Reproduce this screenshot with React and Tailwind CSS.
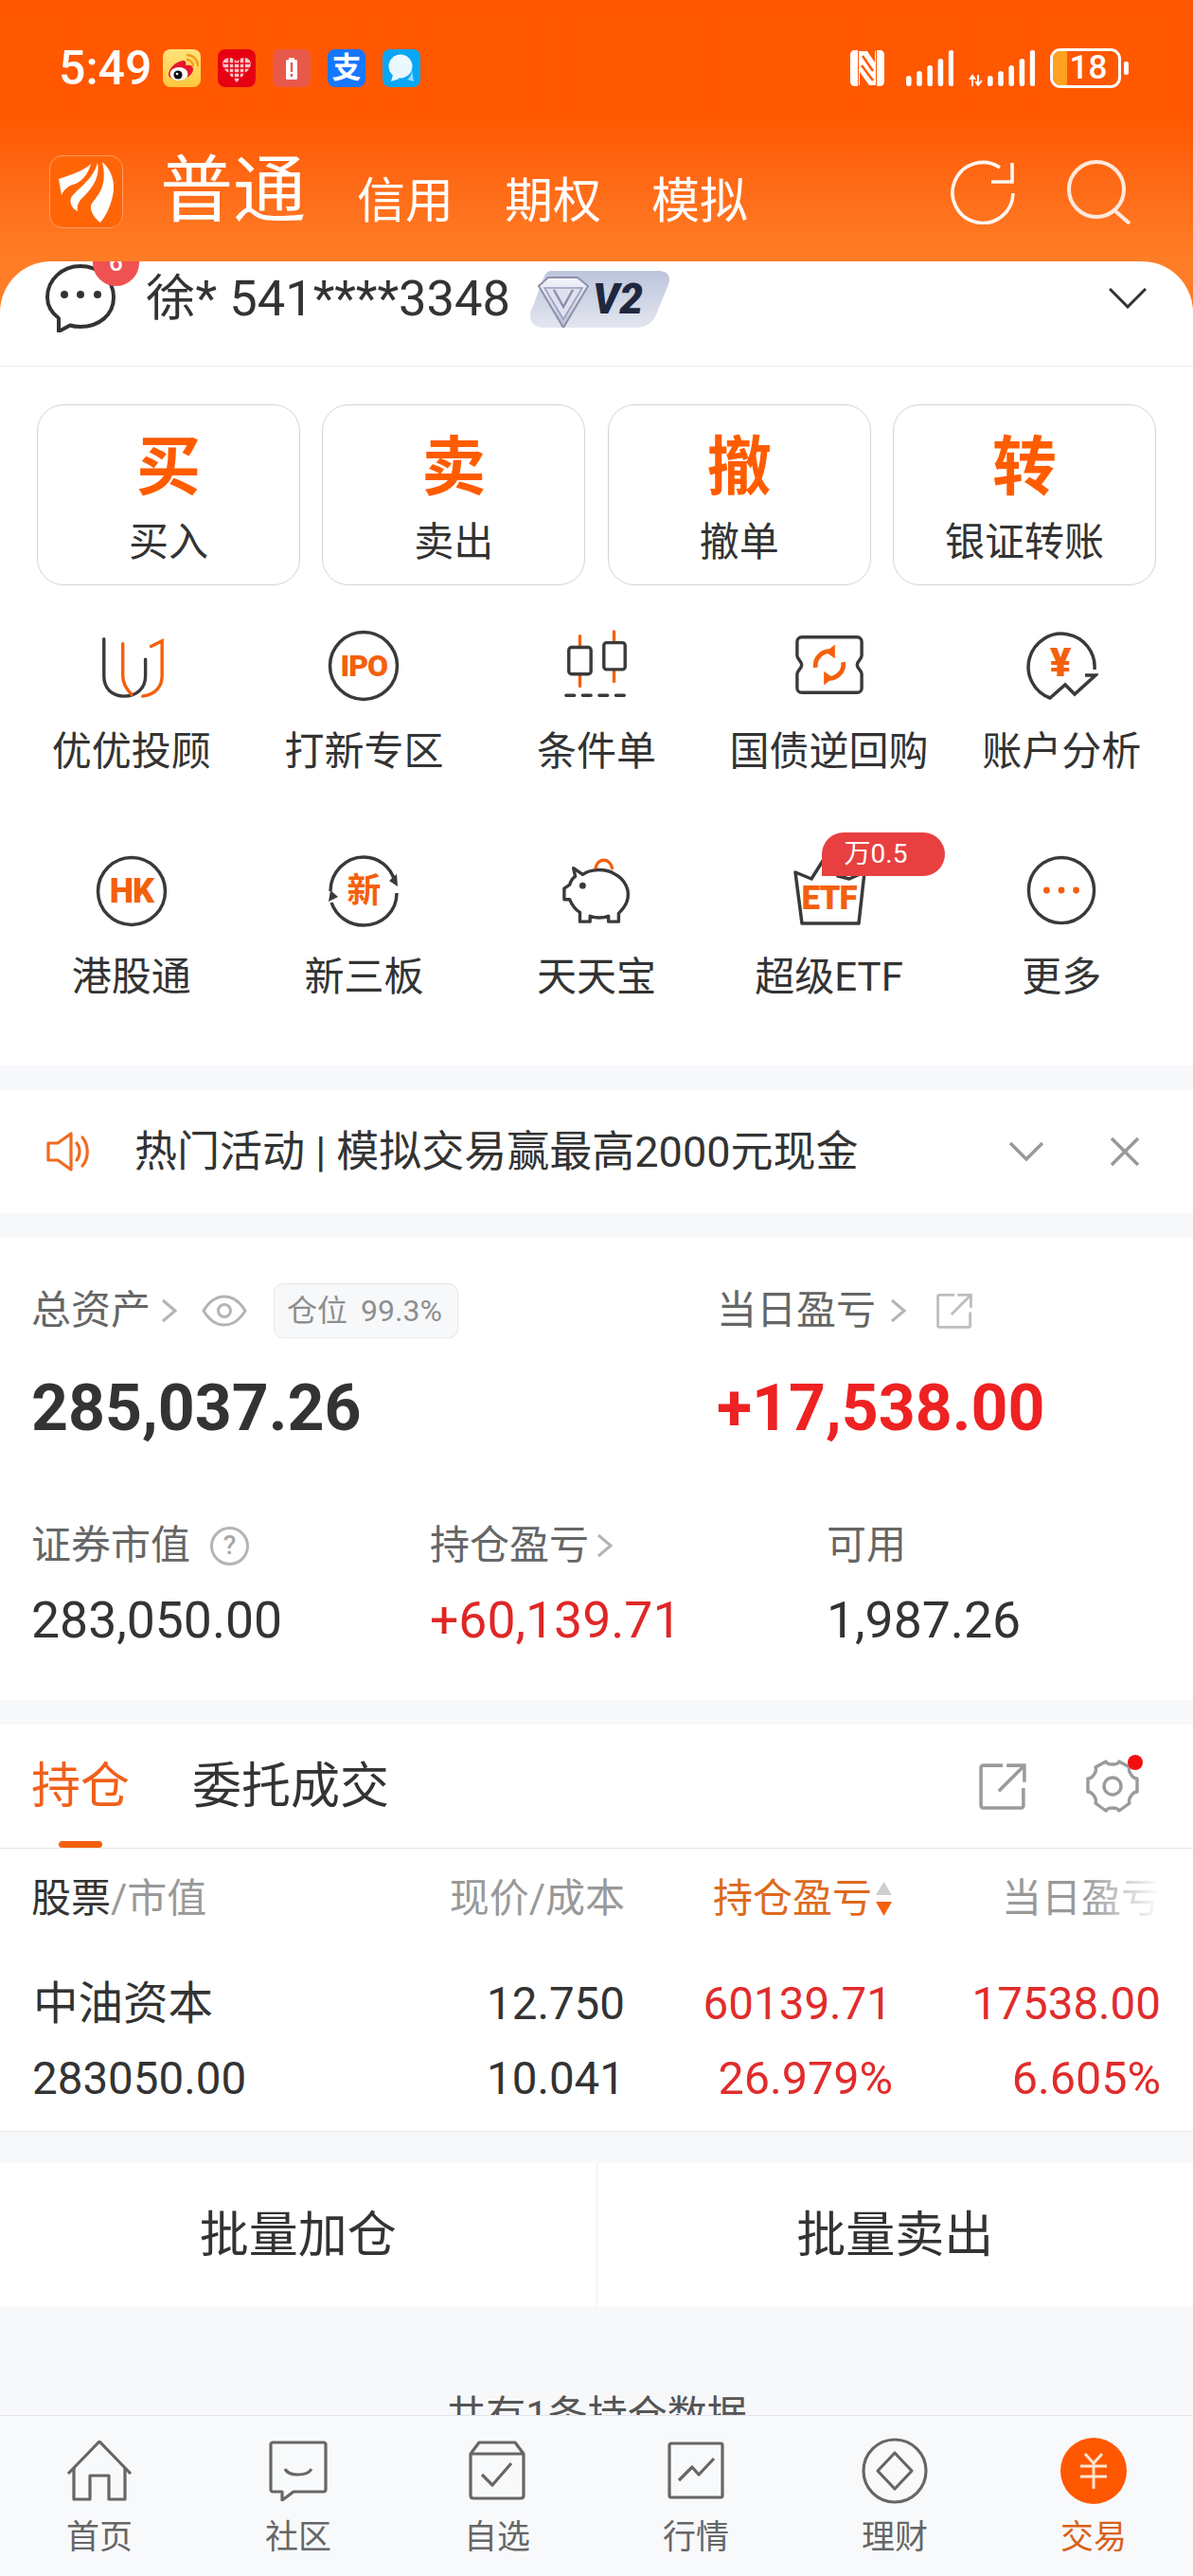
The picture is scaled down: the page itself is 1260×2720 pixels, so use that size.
import React from "react";

const D = "#3a3a3a";
const O = "#f4600c";

function Weibo() {
  return (
    <div className="w-[40px] h-[40px] rounded-[8px] bg-linear-to-b from-[#ffe27a] to-[#ffc83c] overflow-hidden">
      <svg viewBox="0 0 40 40" className="w-[40px] h-[40px]">
        <path d="M6 27c0-7 8-14 15-15 3 0 4 2 3 5 4-1 8 0 8 4 0 6-8 11-15 11-6 0-11-2-11-5z" fill="#e6162d" />
        <ellipse cx="17" cy="26" rx="9.5" ry="7" fill="#fff" />
        <circle cx="16" cy="27" r="4.6" fill="#111" />
        <circle cx="15" cy="26" r="1.3" fill="#fff" />
        <path d="M25 11c4 0 7 3 7 7M25 6c7 0 12 5 12 12" stroke="#f59c1a" strokeWidth="2.4" fill="none" />
      </svg>
    </div>
  );
}

function Pdd() {
  return (
    <div className="w-[40px] h-[40px] rounded-[8px] bg-[#e60012]">
      <svg viewBox="0 0 40 40" className="w-[40px] h-[40px]">
        <path d="M20 35 L7 21 C3 15 6 9 12 9 C15.500 9 18 10.500 20 13 C22 10.500 24.500 9 28 9 C34 9 37 15 33 21 Z" fill="#f7c5c9" />
        <path d="M6 15H34M6 20H34M9 25H31M13 30H27M12 9V30M17 9V34M23 9V34M28 9V30" stroke="#e60012" strokeWidth="1.5" />
      </svg>
    </div>
  );
}

function BatteryApp() {
  return (
    <div className="w-[40px] h-[40px] rounded-[8px] bg-[#e9594b]">
      <svg viewBox="0 0 40 40" className="w-[40px] h-[40px]">
        <rect x="17" y="9" width="6" height="2.500" fill="#fff" />
        <rect x="14" y="11" width="12" height="21" rx="1.500" fill="#fff" />
        <rect x="18.800" y="14" width="2.400" height="10" fill="#e9594b" />
        <rect x="18.800" y="26" width="2.400" height="3" fill="#e9594b" />
      </svg>
    </div>
  );
}

function Alipay() {
  return (
    <div className="w-[40px] h-[40px] rounded-[8px] bg-[#1677ff] flex items-center justify-center text-white text-[31px] leading-[40px] font-bold">
      支
    </div>
  );
}

function Bubble() {
  return (
    <div className="w-[40px] h-[40px] rounded-[8px] bg-[#07a6f6]">
      <svg viewBox="0 0 40 40" className="w-[40px] h-[40px]">
        <circle cx="19" cy="18" r="12.500" fill="#eaf8ff" />
        <path d="M11 27 L9 34 L18 31 Z" fill="#eaf8ff" />
        <path d="M31 22 C31 26 29 30 26 32 L33 34 Z" fill="#8fdcff" />
      </svg>
    </div>
  );
}

function Nfc() {
  return (
    <svg viewBox="0 0 36 38" className="w-[36px] h-[38px]">
      <path d="M8 0 H5 C2 0 0 2 0 5 V33 C0 36 2 38 5 38 H8 Z" fill="#fff" />
      <path d="M28 0 H31 C34 0 36 2 36 5 V33 C36 36 34 38 31 38 H28 Z" fill="#fff" />
      <path d="M11 1 H18 L26 13 V1 H27 V37 H20 L10 23 V37 H9 V1 Z" fill="#fff" />
      <path d="M13 6 L24 22 M12 16 L24 32" stroke="#ff5800" strokeWidth="2.400" />
    </svg>
  );
}

function Bars({ arrows }) {
  const w = arrows ? 70 : 50;
  const off = arrows ? 20 : 0;
  const hs = [11, 16, 22, 29, 38];
  return (
    <svg viewBox={`0 0 ${w} 38`} width={w} height={38}>
      {arrows && <path d="M4 38 V28 M1 31 L4 27 L7 31 M10 26 V36 M7.500 33 L10 37 L14 32" stroke="#fff" strokeWidth="2" fill="none" />}
      {hs.map((h, i) => (
        <rect key={i} x={off + i * 11.2} y={38 - h} width={5.6} height={h} rx={2.8} fill="#fff" />
      ))}
    </svg>
  );
}

function Battery() {
  return (
    <div className="flex items-center">
      <div className="relative w-[75px] h-[42px] rounded-[11px] border-[3px] border-white overflow-hidden flex items-center justify-center">
        <div className="absolute left-0 top-0 bottom-0 w-[15px] bg-[#ffa11f]" />
        <span className="relative text-white text-[35px] leading-[36px] font-medium pl-[6px]">18</span>
      </div>
      <div className="w-[5px] h-[14px] ml-[3px] rounded-[2px] bg-white" />
    </div>
  );
}

function Logo() {
  return (
    <div className="w-[78px] h-[77px] rounded-[14px] border border-[#ff9d62] bg-[#ff6506] shrink-0">
      <svg viewBox="0 0 76 75" className="w-[76px] h-[75px]">
        <path d="M9 24 C20 20 35 16 43 8 C40 20 32 28 24 30 C18 32 14 36 12 41 Z" fill="#fff" />
        <path d="M50 7 C53 22 44 34 36 42 C30 47 28 52 29 58 C24 56 20 50 22 44 C26 36 45 26 50 7 Z" fill="#fff" />
        <path d="M55 6 C66 15 69 30 66 42 C63 55 58 64 53 70 C47 66 42 58 43 52 C46 44 62 36 55 6 Z" fill="#fff" />
      </svg>
    </div>
  );
}

function Refresh() {
  return (
    <svg viewBox="0 0 68 68" className="w-[68px] h-[68px]" fill="none" stroke="#fff" strokeWidth="3.600" opacity="0.95">
      <path d="M66 35 A32 32 0 1 1 52 8" />
      <path d="M65 3 V23 H43" />
    </svg>
  );
}

function Search() {
  return (
    <svg viewBox="0 0 68 68" className="w-[68px] h-[68px]" fill="none" stroke="#ffe9dd" strokeWidth="4">
      <circle cx="31" cy="31" r="29" />
      <path d="M50 53 L66 67" />
    </svg>
  );
}

function Msg() {
  return (
    <svg viewBox="0 0 74 72" className="w-[74px] h-[72px]" fill="none" stroke="#333" strokeWidth="4">
      <path d="M14 71 V57 C5 50 2 42 2 35 C2 16 18 2 37 2 C56 2 72 16 72 35 C72 54 56 66 37 66 C33 66 29 65.500 26 64.500 Z" strokeLinejoin="round" />
      <circle cx="20" cy="32" r="4" fill="#333" stroke="none" />
      <circle cx="37" cy="32" r="4" fill="#333" stroke="none" />
      <circle cx="55" cy="32" r="4" fill="#333" stroke="none" />
    </svg>
  );
}

function V2Badge() {
  return (
    <div className="relative w-[148px] h-[60px] shrink-0">
      <svg viewBox="0 0 148 60" className="w-[148px] h-[60px]">
        <defs>
          <linearGradient id="vb" x1="0" y1="0" x2="0" y2="1">
            <stop offset="0" stopColor="#bcc5dd" />
            <stop offset="1" stopColor="#e3e6ee" />
          </linearGradient>
          <linearGradient id="gem" x1="0" y1="0" x2="0" y2="1">
            <stop offset="0" stopColor="#f4f5fb" />
            <stop offset="1" stopColor="#b9bcd2" />
          </linearGradient>
        </defs>
        <path d="M22 0 H136 C145 0 149 6 146 14 L134 44 C130 54 124 60 112 60 H14 C5 60 0 55 0 48 C0 44 1 41 3 37 L14 8 C16 3 18 0 22 0 Z" fill="url(#vb)" />
        <path d="M9 16 L19 7 H50 L61 16 L35 60 Z" fill="url(#gem)" stroke="#8d90ad" strokeWidth="2" strokeLinejoin="round" />
        <path d="M15 18 H55 L35 51 Z" fill="#dfe1ee" stroke="#9a9dba" strokeWidth="1.500" />
        <path d="M25 20 L35 38 L45 20" fill="none" stroke="#8d90ad" strokeWidth="2.500" />
      </svg>
      <span className="absolute left-[66px] top-[7px] text-[#1f2740] text-[44px] leading-[46px] font-black italic">V2</span>
    </div>
  );
}

function Chevron({ w, h, color, sw }) {
  return (
    <svg viewBox={`0 0 ${w} ${h}`} width={w} height={h} fill="none" stroke={color} strokeWidth={sw}>
      <path d={`M1 1 L${w / 2} ${h - 2} L${w - 1} 1`} />
    </svg>
  );
}

function Right({ className }) {
  return (
    <svg viewBox="0 0 18 26" className={className} fill="none" stroke="#b4b4b4" strokeWidth="3">
      <path d="M2 2 L15 13 L2 24" />
    </svg>
  );
}

function IconU() {
  return (
    <svg viewBox="0 0 78 78" className="w-[78px] h-[78px]" fill="none" strokeWidth="3.500" strokeLinecap="round">
      <path d="M9 10 V50 C9 64 18 72 31 72 C44 72 54 64 54 50 V32" stroke={D} />
      <path d="M29.500 15 V50 C29.500 58 33 64 39 70" stroke={O} />
      <path d="M60 18 L72 12 V50 C72 60 66 70 51 72" stroke={O} />
    </svg>
  );
}

function CircleText({ t, size, dy }) {
  return (
    <div className="relative w-[78px] h-[78px] flex items-center justify-center">
      <svg viewBox="0 0 78 78" className="absolute inset-0 w-[78px] h-[78px]" fill="none" stroke={D} strokeWidth="3.500">
        <circle cx="39" cy="38" r="35.500" />
      </svg>
      <span className="relative font-black text-[#f4600c] leading-none tracking-[-1px]" style={{ fontSize: size, marginTop: dy }}>{t}</span>
    </div>
  );
}

function IconCandle() {
  return (
    <svg viewBox="0 0 78 78" className="w-[78px] h-[78px]" fill="none" strokeWidth="3.500" strokeLinecap="round">
      <path d="M21 7 V61 M58 2 V56" stroke={O} />
      <rect x="9" y="19" width="24" height="29" rx="3" fill="#fff" stroke={D} />
      <rect x="47" y="14" width="23" height="29" rx="3" fill="#fff" stroke={D} />
      <path d="M6 71 H73" stroke={D} strokeDasharray="9 9" />
    </svg>
  );
}

function IconTicket() {
  return (
    <svg viewBox="0 0 78 78" className="w-[78px] h-[78px]" fill="none" strokeWidth="3.500">
      <path d="M9 8 H69 C72 8 74 10 74 13 V28 C74 32 69 34 69 38 C69 42 74 44 74 48 V63 C74 66 72 68 69 68 H9 C6 68 4 66 4 63 V48 C4 44 9 42 9 38 C9 34 4 32 4 28 V13 C4 10 6 8 9 8 Z" stroke={D} />
      <path d="M24 41 A15.500 15.500 0 0 1 42 23.500 M54 35 A15.500 15.500 0 0 1 36 52.500" stroke={O} strokeWidth="5" />
      <path d="M45 16 L35 24 L45 31 Z M33 45 L43 52 L33 60 Z" fill={O} />
    </svg>
  );
}

function IconYen() {
  return (
    <div className="relative w-[78px] h-[78px] flex items-center justify-center">
      <svg viewBox="0 0 78 78" className="absolute inset-0 w-[78px] h-[78px]" fill="none" stroke={D} strokeWidth="3.500">
        <path d="M74 42 A35 35 0 1 0 27 72 L43 58 L53 68 L75 48 H64" />
      </svg>
      <span className="relative text-[#f4600c] font-black text-[42px] leading-none mb-[6px] mr-[2px]">¥</span>
    </div>
  );
}

function IconNew() {
  return (
    <div className="relative w-[78px] h-[78px] flex items-center justify-center">
      <svg viewBox="0 0 78 78" className="absolute inset-0 w-[78px] h-[78px]" fill="none" stroke={D} strokeWidth="3.500">
        <path d="M4 38 C4 18 20 2 39 2 C55 2 67 12 72 27" />
        <path d="M74 40 C74 60 58 74 39 74 C23 74 10 64 5 50" />
        <path d="M66 27 L74 20 L75 33 Z M2 49 L12 44 L4 37 Z" fill={D} stroke="none" />
      </svg>
      <span className="relative font-bold text-[#f4600c] text-[36px] leading-none">新</span>
    </div>
  );
}

function IconPig() {
  return (
    <svg viewBox="0 0 78 78" className="w-[78px] h-[78px]" fill="none" strokeWidth="3.500" strokeLinejoin="round">
      <path d="M38 14 C40 3 53 2 56 14" stroke={O} strokeLinecap="round" />
      <path d="M14 14 L24 21 C32 15 48 14 58 20 C70 26 76 38 72 50 C70 56 66 60 63 63 V72 H52 V66 C46 68 38 68 32 66 V72 H21 V62 C15 58 12 53 10 48 H4 V36 L10 32 C11 28 13 25 16 23 Z" stroke={D} />
      <circle cx="24" cy="33" r="3.500" fill={D} />
    </svg>
  );
}

function IconEtf() {
  return (
    <div className="relative w-[78px] h-[78px]">
      <svg viewBox="0 0 78 78" className="absolute inset-0 w-[78px] h-[78px]" fill="none" stroke={D} strokeWidth="3.500">
        <path d="M3 18 L20 25 L32 6 L48 22 L60 25 L76 18 L70 72 H10 Z" strokeLinejoin="round" />
      </svg>
      <span className="absolute left-0 right-0 top-[28px] text-center font-black text-[#f4600c] text-[35px] leading-none tracking-[-1px]">ETF</span>
      <div className="absolute left-[31px] top-[-24px] w-[130px] h-[46px] rounded-t-[23px] rounded-br-[23px] bg-[#e84040] text-white text-[28px] leading-[46px] pl-[24px] whitespace-nowrap">
        万0.5
      </div>
    </div>
  );
}

function IconMore() {
  return (
    <svg viewBox="0 0 78 78" className="w-[78px] h-[78px]" fill="none" stroke={D} strokeWidth="3.500">
      <circle cx="39" cy="38" r="35.500" />
      <circle cx="23" cy="38" r="3.500" fill={O} stroke="none" />
      <circle cx="39" cy="38" r="3.500" fill={O} stroke="none" />
      <circle cx="55" cy="38" r="3.500" fill={O} stroke="none" />
    </svg>
  );
}

function Speaker() {
  return (
    <svg viewBox="0 0 46 42" className="w-[46px] h-[42px]" fill="none" stroke="#f06a20" strokeWidth="3.200" strokeLinejoin="round">
      <path d="M2 12 H12 L26 2 V40 L12 30 H2 Z" />
      <path d="M32 12 C36 17 36 25 32 30 M38 6 C45 14 45 28 38 36" strokeLinecap="round" />
    </svg>
  );
}

function Eye() {
  return (
    <svg viewBox="0 0 48 34" className="w-[48px] h-[34px]" fill="none" stroke="#b4b4b4" strokeWidth="3">
      <path d="M2 17 C8 7 15 2 24 2 C33 2 40 7 46 17 C40 27 33 32 24 32 C15 32 8 27 2 17 Z" />
      <circle cx="24" cy="17" r="6.500" />
    </svg>
  );
}

function OpenBox({ size, color, sw }) {
  return (
    <svg viewBox="0 0 48 48" width={size} height={size} fill="none" stroke={color} strokeWidth={sw}>
      <path d="M24 3 H4 C3 3 2 4 2 5 V44 C2 45 3 46 4 46 H43 C44 46 45 45 45 44 V26" />
      <path d="M20 29 L45 4 M28 3 H46 V20" />
    </svg>
  );
}

function Help() {
  return (
    <div className="ml-[21px] w-[41px] h-[41px] rounded-full border-[3px] border-[#b4b4b4] flex items-center justify-center text-[#a8a8a8] text-[28px] leading-none font-medium">
      ?
    </div>
  );
}

function Gear() {
  return (
    <div className="relative w-[58px] h-[58px]">
      <svg viewBox="0 0 58 58" className="w-[58px] h-[58px]" fill="none" stroke="#9b9b9b" strokeWidth="3.400" strokeLinejoin="round">
        <path d="M22 3 C24 7 34 7 36 3 L47 9 C45 13 50 21 55 21 V35 C50 35 45 43 47 47 L36 55 C34 51 24 51 22 55 L11 47 C13 43 8 35 3 35 V21 C8 21 13 13 11 9 Z" />
        <circle cx="29" cy="29" r="9" />
      </svg>
      <div className="absolute right-[-3px] top-[-4px] w-[16px] h-[16px] rounded-full bg-[#f40f0f]" />
    </div>
  );
}

function Sort() {
  return (
    <svg viewBox="0 0 19 36" className="w-[19px] h-[36px] ml-[3px]">
      <path d="M9.500 0 L18 14 H1 Z" fill="#cfcfcf" />
      <path d="M1 21 H18 L9.500 36 Z" fill="#f4600c" />
    </svg>
  );
}

const navStroke = "#666";

function NavHome() {
  return (
    <svg viewBox="0 0 70 64" className="w-[70px] h-[64px]" fill="none" stroke={navStroke} strokeWidth="3.200">
      <path d="M2 35 L35 1 L68 35" />
      <path d="M8 29 V62 H25 V37 H45 V62 H62 V29" strokeLinejoin="round" />
    </svg>
  );
}
function NavChat() {
  return (
    <svg viewBox="0 0 62 64" className="w-[62px] h-[64px]" fill="none" stroke={navStroke} strokeWidth="3.200" strokeLinejoin="round">
      <path d="M4 2 H58 C59 2 60 3 60 4 V52 C60 53 59 54 58 54 H26 L14 63 V54 H4 C3 54 2 53 2 52 V4 C2 3 3 2 4 2 Z" />
      <path d="M17 30 C21 38 40 38 45 30" />
    </svg>
  );
}
function NavBox() {
  return (
    <svg viewBox="0 0 62 64" className="w-[62px] h-[64px]" fill="none" stroke={navStroke} strokeWidth="3.200" strokeLinejoin="round">
      <path d="M12 2 H50 L59 14 V58 C59 60 58 61 56 61 H6 C4 61 3 60 3 58 V14 Z" />
      <path d="M3 14 H59" />
      <path d="M15 36 L26 47 L46 24" />
    </svg>
  );
}
function NavChart() {
  return (
    <svg viewBox="0 0 62 64" className="w-[62px] h-[64px]" fill="none" stroke={navStroke} strokeWidth="3.200" strokeLinejoin="round">
      <rect x="3" y="3" width="56" height="57" rx="2" />
      <path d="M13 42 L27 28 L34 36 L50 19" />
    </svg>
  );
}
function NavDiamond() {
  return (
    <svg viewBox="0 0 70 70" className="w-[70px] h-[70px]" fill="none" stroke={navStroke} strokeWidth="3.200" strokeLinejoin="round">
      <circle cx="35" cy="35" r="33" />
      <path d="M35 16 L53 35 L35 54 L17 35 Z" />
    </svg>
  );
}
function NavTrade() {
  return (
    <div className="w-[70px] h-[70px] rounded-full bg-[#ff5800] flex items-center justify-center">
      <svg viewBox="0 0 32 38" className="w-[32px] h-[38px]" fill="none" stroke="#ffe4d4" strokeWidth="3">
        <path d="M7 1 L16 11 L25 1 M2 14 H30 M2 25 H30 M16 11 V38" />
      </svg>
    </div>
  );
}

const trades = [["买", "买入"], ["卖", "卖出"], ["撤", "撤单"], ["转", "银证转账"]];

const shortcuts = [
  [<IconU />, "优优投顾"],
  [<CircleText t="IPO" size={32} dy={-1} />, "打新专区"],
  [<IconCandle />, "条件单"],
  [<IconTicket />, "国债逆回购"],
  [<IconYen />, "账户分析"],
  [<CircleText t="HK" size={36} dy={-1} />, "港股通"],
  [<IconNew />, "新三板"],
  [<IconPig />, "天天宝"],
  [<IconEtf />, "超级ETF"],
  [<IconMore />, "更多"],
];

const navs = [
  [<NavHome />, "首页"],
  [<NavChat />, "社区"],
  [<NavBox />, "自选"],
  [<NavChart />, "行情"],
  [<NavDiamond />, "理财"],
  [<NavTrade />, "交易"],
];

export default function App() {
  return (
    <div className="w-[1260px] h-[2720px] flex flex-col overflow-hidden bg-[#f7f8fa] text-[#333] font-['Roboto','Noto_Sans_CJK_SC',sans-serif]">
      <div className="flex-1 min-h-0 overflow-hidden">
        <div className="bg-[#ff7d26]">
          <div className="h-[276px] bg-linear-to-b from-[#ff5800] from-45% to-[#ff7d26]">
            <div className="flex items-center h-[40px] translate-y-[52px] pl-[62px] pr-[68px]">
              <span className="text-white text-[50px] leading-[40px] font-medium w-[94px] whitespace-nowrap">5:49</span>
              <div className="flex gap-[18px] ml-[16px]">
                <Weibo />
                <Pdd />
                <BatteryApp />
                <Alipay />
                <Bubble />
              </div>
              <div className="ml-auto flex items-center">
                <Nfc />
                <div className="ml-[23px]"><Bars /></div>
                <div className="ml-[16px]"><Bars arrows /></div>
                <div className="ml-[16px]"><Battery /></div>
              </div>
            </div>
            <div className="flex items-center h-[77px] translate-y-[124px] pl-[52px] pr-[65px] text-white">
              <Logo />
              <span className="ml-[39px] text-[77px] leading-[77px] w-[154px] whitespace-nowrap">普通</span>
              <span className="ml-[54px] mt-[20px] text-[51px] leading-[56px] w-[102px] whitespace-nowrap">信用</span>
              <span className="ml-[54px] mt-[20px] text-[51px] leading-[56px] w-[102px] whitespace-nowrap">期权</span>
              <span className="ml-[53px] mt-[20px] text-[51px] leading-[56px] w-[102px] whitespace-nowrap">模拟</span>
              <div className="ml-auto flex items-center gap-[55px]">
                <Refresh />
                <Search />
              </div>
            </div>
          </div>
          <div className="bg-white rounded-t-[54px] h-[111px] flex items-start border-b border-[#ececec] relative overflow-hidden">
            <div className="ml-[48px] mt-[3px] w-[74px]"><Msg /></div>
            <div className="absolute left-[98px] top-[-24px] w-[49px] h-[50px] rounded-full bg-[#f05252] text-white text-[26px] leading-[50px] text-center font-medium">6</div>
            <span className="ml-[32px] mt-[9px] text-[52.5px] leading-[60px] whitespace-nowrap">徐* 541****3348</span>
            <div className="ml-auto mt-[10px]"><V2Badge /></div>
            <div className="ml-[463px] mr-[49px] mt-[28px]"><Chevron w={40} h={22} color="#333" sw={3} /></div>
          </div>
        </div>

        <div className="bg-white h-[738px] pl-[39px] pr-[39px] pt-[40px]">
          <div className="flex justify-between">
            {trades.map(([big, small]) => (
              <div key={big} className="w-[278px] h-[191px] rounded-[28px] border border-[#d4d4d4] flex flex-col items-center">
                <span className="mt-[28px] text-[#ff5c00] text-[68px] leading-[76px] font-bold">{big}</span>
                <span className="mt-[17px] text-[42px] leading-[48px]">{small}</span>
              </div>
            ))}
          </div>
          <div className="-ml-[23px] -mr-[23px] mt-[47px] grid grid-cols-5 gap-y-[84px]">
            {shortcuts.map(([icon, label]) => (
              <div key={label} className="flex flex-col items-center h-[154px]">
                {icon}
                <span className="mt-[28px] text-[42px] leading-[50px] whitespace-nowrap">{label}</span>
              </div>
            ))}
          </div>
        </div>

        <div className="mt-[26px] bg-white h-[130px] flex items-center pl-[49px]">
          <Speaker />
          <span className="ml-[47px] pt-[2px] text-[45px] leading-[60px] whitespace-nowrap">热门活动 | 模拟交易赢最高2000元现金</span>
          <div className="ml-[160px]"><Chevron w={36} h={20} color="#999" sw={3.5} /></div>
          <svg viewBox="0 0 32 32" className="ml-[70px] w-[32px] h-[32px]" fill="none" stroke="#999" strokeWidth="3.500">
            <path d="M2 2 L30 30 M30 2 L2 30" />
          </svg>
        </div>

        <div className="mt-[26px] bg-white h-[488px] pl-[33px] pr-[35px] pt-[47px]">
          <div className="grid grid-cols-[723px_1fr]">
            <div className="flex items-center h-[60px]">
              <span className="text-[42px] leading-[60px] text-[#666] w-[126px] whitespace-nowrap">总资产</span>
              <Right className="ml-[11px] w-[18px] h-[26px]" />
              <div className="ml-[25px]"><Eye /></div>
              <div className="ml-[28px] w-[195px] h-[58px] rounded-[10px] border border-[#e6e6e6] bg-[#f7f8fa] flex items-center pl-[13px] text-[#8e8e8e] text-[32px] leading-[56px] whitespace-nowrap">
                <span>仓位</span>
                <span className="ml-[14px]">99.3%</span>
              </div>
            </div>
            <div className="flex items-center h-[60px] pl-[1px]">
              <span className="text-[42px] leading-[60px] text-[#666] whitespace-nowrap">当日盈亏</span>
              <Right className="ml-[15px] w-[18px] h-[26px]" />
              <div className="ml-[31px]"><OpenBox size={38} color="#bdbdbd" sw="3.500" /></div>
            </div>
            <div className="mt-[28px] text-[68px] leading-[90px] font-bold">285,037.26</div>
            <div className="mt-[28px] pl-[1px] text-[68px] leading-[90px] font-bold text-[#ee2222]">+17,538.00</div>
          </div>
          <div className="mt-[70px] grid grid-cols-[421px_419px_1fr]">
            <div className="flex items-center h-[60px]">
              <span className="text-[42px] leading-[60px] text-[#666] whitespace-nowrap">证券市值</span>
              <Help />
            </div>
            <div className="flex items-center h-[60px]">
              <span className="text-[42px] leading-[60px] text-[#666] whitespace-nowrap">持仓盈亏</span>
              <Right className="ml-[8px] w-[18px] h-[26px]" />
            </div>
            <div className="text-[42px] leading-[60px] text-[#666]">可用</div>
            <div className="mt-[14px] text-[53.5px] leading-[70px]">283,050.00</div>
            <div className="mt-[14px] text-[53.5px] leading-[70px] text-[#e02626]">+60,139.71</div>
            <div className="mt-[14px] text-[53.5px] leading-[70px]">1,987.26</div>
          </div>
        </div>

        <div className="mt-[26px] bg-white border-b border-[#e9e9e9]">
          <div className="h-[131px] flex items-center pl-[33px] pr-[56px] border-b border-[#e6e6e6] relative">
            <span className="text-[52px] leading-[62px] mt-[2px] text-[#f0601a]">持仓</span>
            <span className="ml-[66px] text-[52px] leading-[62px] mt-[2px]">委托成交</span>
            <div className="absolute left-[62px] bottom-0 w-[46px] h-[7px] rounded-full bg-[#f4600c]" />
            <div className="ml-auto"><OpenBox size={50} color="#9b9b9b" sw="3.400" /></div>
            <div className="ml-[62px]"><Gear /></div>
          </div>
          <div className="grid grid-cols-[387px_240px_283px_283px] pl-[33px]">
            <div className="h-[106px] flex items-center text-[42px] leading-[60px] mb-[18px]">
              <span>股票</span><span className="text-[#999]">/市值</span>
            </div>
            <div className="h-[106px] flex items-center justify-end text-[42px] leading-[60px] text-[#999] whitespace-nowrap">现价/成本</div>
            <div className="h-[106px] flex items-center justify-end text-[42px] leading-[60px] text-[#dd6a1f] whitespace-nowrap">
              <span>持仓盈亏</span><Sort />
            </div>
            <div className="relative h-[106px] flex items-center justify-end text-[42px] leading-[60px] text-[#999] whitespace-nowrap">
              <span>当日盈亏</span>
              <div className="absolute right-0 top-0 bottom-0 w-[80px] bg-linear-to-r from-white/0 to-white" />
            </div>

            <div className="h-[78px] pt-[2px] flex items-center text-[47.5px] leading-[60px] pl-[2px]">中油资本</div>
            <div className="h-[78px] pt-[2px] flex items-center justify-end text-[47.5px] leading-[60px]">12.750</div>
            <div className="h-[78px] pt-[2px] flex items-center justify-end text-[47.5px] leading-[60px] text-[#e02c2c] pr-[1px]">60139.71</div>
            <div className="h-[78px] pt-[2px] flex items-center justify-end text-[47.5px] leading-[60px] text-[#e02c2c]">17538.00</div>

            <div className="h-[78px] pt-[3px] flex items-center text-[47.5px] leading-[60px] pl-[1px]">283050.00</div>
            <div className="h-[78px] pt-[3px] flex items-center justify-end text-[47.5px] leading-[60px]">10.041</div>
            <div className="h-[78px] pt-[3px] flex items-center justify-end text-[48.5px] leading-[60px] text-[#e02c2c]">26.979%</div>
            <div className="h-[78px] pt-[3px] flex items-center justify-end text-[48.5px] leading-[60px] text-[#e02c2c]">6.605%</div>
            <div className="h-[18px] col-span-4" />
          </div>
        </div>

        <div className="mt-[33px] bg-white h-[151px] flex">
          <div className="flex-1 flex items-center justify-center text-[52px] leading-[62px] pt-[2px] border-r border-[#eeeeee]">批量加仓</div>
          <div className="flex-1 flex items-center justify-center text-[52px] leading-[62px] pt-[2px]">批量卖出</div>
        </div>

        <div className="mt-[93px] text-center text-[#555] text-[42px] leading-[46px]">共有1条持仓数据</div>
      </div>

      <div className="h-[170px] shrink-0 bg-[#f8f9fb] border-t border-[#e4e4ea] grid grid-cols-6">
        {navs.map(([icon, label], i) => (
          <div key={label} className="flex flex-col items-center">
            <div className="h-[70px] mt-[23px] flex items-center justify-center">{icon}</div>
            <span className={i === 5 ? "mt-[16px] text-[35px] leading-[40px] text-[#d9601a]" : "mt-[16px] text-[35px] leading-[40px] text-[#666]"}>{label}</span>
          </div>
        ))}
      </div>
    </div>
  );
}
